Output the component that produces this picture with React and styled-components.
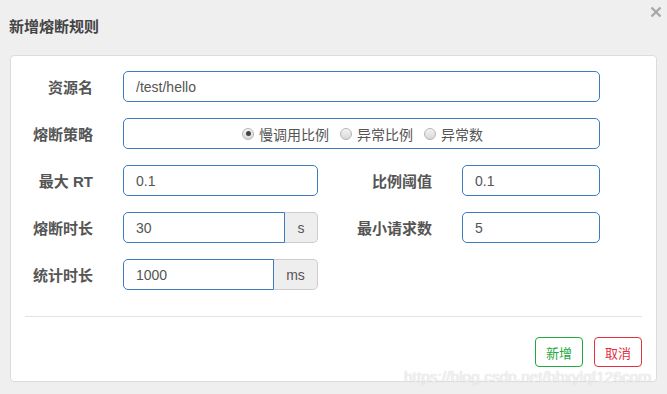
import React from 'react'
import styled, { createGlobalStyle } from 'styled-components'

const GlobalStyle = createGlobalStyle`
  html, body {
    margin: 0;
    padding: 0;
    background: #efefef;
  }
  body {
    font-family: "Liberation Sans", "Noto Sans CJK SC", sans-serif;
  }
`

export default function App() {
  return (
    <Page>
      <GlobalStyle />
      <Header>
        <Title>新增熔断规则</Title>
        <Close aria-label="close">
          <svg width="12" height="12" viewBox="0 0 12 12">
            <path d="M1.5 1.5 L10.5 10.5 M10.5 1.5 L1.5 10.5" stroke="#a9a9a9" strokeWidth="2.4" />
          </svg>
        </Close>
      </Header>
      <Card>
        <Row>
          <Label>资源名</Label>
          <Input width={477} defaultValue="/test/hello" />
        </Row>
        <Row>
          <Label>熔断策略</Label>
          <RadioBox>
            <RadioItem><Radio checked />慢调用比例</RadioItem>
            <RadioItem><Radio />异常比例</RadioItem>
            <RadioItem><Radio />异常数</RadioItem>
          </RadioBox>
        </Row>
        <Row>
          <Label>最大 RT</Label>
          <Input width={195} defaultValue="0.1" />
          <Label wide>比例阈值</Label>
          <Input width={138} defaultValue="0.1" />
        </Row>
        <Row>
          <Label>熔断时长</Label>
          <Group>
            <GroupInput defaultValue="30" />
            <Addon width={33}>s</Addon>
          </Group>
          <Label wide>最小请求数</Label>
          <Input width={138} defaultValue="5" />
        </Row>
        <Row>
          <Label>统计时长</Label>
          <Group>
            <GroupInput defaultValue="1000" />
            <Addon width={44}>ms</Addon>
          </Group>
        </Row>
        <Divider />
        <Footer>
          <Button color="#22a83c">新增</Button>
          <Button color="#e2313f">取消</Button>
        </Footer>
      </Card>
      <Watermark>https://blog.csdn.net/bbxylqf126com</Watermark>
    </Page>
  )
}

const Page = styled.div`
  position: relative;
  width: 667px;
  height: 394px;
  box-sizing: border-box;
  padding: 0 10px;
  overflow: hidden;
`

const Header = styled.div`
  display: flex;
  justify-content: space-between;
  height: 50px;
`

const Title = styled.div`
  align-self: center;
  margin-left: -1px;
  font-family: "Noto Sans CJK SC", sans-serif;
  font-size: 15px;
  font-weight: bold;
  color: #444;
`

const Close = styled.span`
  margin-top: 6px;
  margin-right: -5px;
  display: flex;
`

const Card = styled.div`
  margin-top: 5px;
  height: 327px;
  box-sizing: border-box;
  padding: 15px 14px;
  background: #fff;
  border: 1px solid #dcdcdc;
  border-radius: 4px;
`

const Row = styled.div`
  display: flex;
  align-items: center;
  height: 31px;
  margin-bottom: 16px;
`

const Label = styled.label`
  box-sizing: border-box;
  width: ${p => (p.wide ? 144 : 98)}px;
  padding-right: 30px;
  text-align: right;
  font-family: "Liberation Sans", "Noto Sans CJK SC", sans-serif;
  font-size: 15px;
  font-weight: bold;
  color: #555;
`

const Input = styled.input`
  box-sizing: border-box;
  width: ${p => p.width}px;
  height: 31px;
  padding: 0 12px;
  border: 1px solid #3a7cbd;
  border-radius: 5px;
  outline: none;
  font-family: "Liberation Sans", sans-serif;
  font-size: 14px;
  color: #555;
  background: #fff;
`

const Group = styled.div`
  display: flex;
  width: 195px;
  height: 31px;
`

const GroupInput = styled(Input)`
  flex: 1;
  width: auto;
  min-width: 0;
  border-radius: 5px 0 0 5px;
`

const Addon = styled.span`
  box-sizing: border-box;
  width: ${p => p.width}px;
  display: flex;
  align-items: center;
  justify-content: center;
  background: #eee;
  border: 1px solid #ccc;
  border-left: none;
  border-radius: 0 5px 5px 0;
  font-size: 14px;
  color: #555;
`

const RadioBox = styled.div`
  box-sizing: border-box;
  width: 477px;
  height: 31px;
  display: flex;
  align-items: center;
  justify-content: center;
  gap: 11px;
  padding-left: 2px;
  border: 1px solid #3a7cbd;
  border-radius: 5px;
`

const RadioItem = styled.span`
  display: flex;
  align-items: center;
  font-family: "Noto Sans CJK SC", sans-serif;
  font-size: 14px;
  color: #555;
`

const Radio = styled.span`
  position: relative;
  width: 12px;
  height: 12px;
  margin-right: 5px;
  box-sizing: border-box;
  border-radius: 50%;
  border: 1px solid #b5b5b5;
  background: linear-gradient(#f4f4f4, #d8d8d8);

  &::after {
    content: '';
    display: ${p => (p.checked ? 'block' : 'none')};
    position: absolute;
    left: 2.5px;
    top: 2.5px;
    width: 5px;
    height: 5px;
    border-radius: 50%;
    background: #444;
  }
`

const Divider = styled.div`
  margin-top: 26px;
  height: 1px;
  background: #e2e2e2;
`

const Footer = styled.div`
  display: flex;
  justify-content: flex-end;
  gap: 11px;
  margin-top: 20px;
`

const Button = styled.button`
  box-sizing: border-box;
  width: 48px;
  height: 30px;
  padding: 0;
  background: #fff;
  border: 1px solid ${p => p.color};
  border-radius: 4px;
  color: ${p => p.color};
  font-family: "Noto Sans CJK SC", sans-serif;
  font-size: 13px;
  cursor: pointer;
`

const Watermark = styled.div`
  position: absolute;
  left: 404px;
  top: 368px;
  font-family: "Liberation Sans", sans-serif;
  font-size: 15.5px;
  color: rgba(255, 255, 255, 0.75);
  text-shadow: 0 0 1px rgba(150, 150, 150, 0.6);
  pointer-events: none;
  white-space: nowrap;
`
